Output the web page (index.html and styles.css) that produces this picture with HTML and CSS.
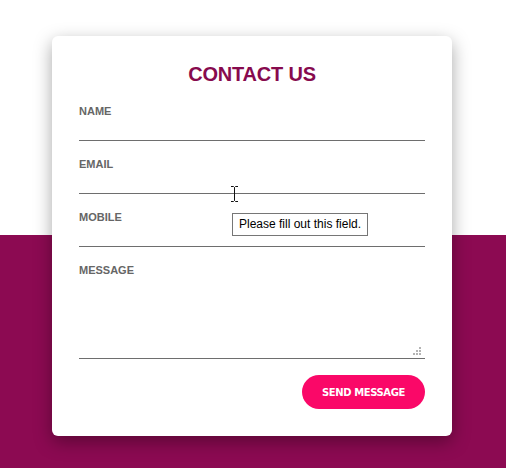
FILE: index.html
```html
<!DOCTYPE html>
<html>
<head>
<meta charset="utf-8">
<link rel="stylesheet" href="styles.css">
</head>
<body>
<div class="page">
  <form class="card">
    <h1 class="title">CONTACT US</h1>
    <div class="field">
      <label class="label">NAME</label>
      <input class="input" type="text">
    </div>
    <div class="field">
      <label class="label">EMAIL</label>
      <div class="input-wrap">
        <input class="input" type="text">
        <svg class="cursor" width="9" height="16" viewBox="0 0 9 16"><path d="M1 0.5h2.5l1 1 1-1H8M4.5 1.5v13M1 15.5h2.5l1-1 1 1H8" fill="none" stroke="#111" stroke-width="1"/></svg>
      </div>
    </div>
    <div class="field">
      <label class="label">MOBILE</label>
      <input class="input" type="text">
    </div>
    <div class="field">
      <label class="label">MESSAGE</label>
      <div class="input-wrap">
        <textarea class="textarea"></textarea>
        <svg class="grip" width="9" height="9" viewBox="0 0 9 9" fill="#b4b4b4"><rect x="6" y="0" width="2" height="2"/><rect x="3" y="3" width="2" height="2"/><rect x="6" y="3" width="2" height="2"/><rect x="0" y="6" width="2" height="2"/><rect x="3" y="6" width="2" height="2"/><rect x="6" y="6" width="2" height="2"/></svg>
      </div>
    </div>
    <div class="actions">
      <button class="button" type="button">SEND MESSAGE</button>
    </div>
    <div class="tooltip">Please fill out this field.</div>
  </form>
</div>
</body>
</html>
```

FILE: styles.css
```css
html, body {
  margin: 0;
  padding: 0;
}
body {
  width: 506px;
  height: 468px;
  overflow: hidden;
  background: linear-gradient(to bottom, #ffffff 0, #ffffff 235px, #8c0a52 235px, #8c0a52 100%);
  font-family: "Liberation Sans", Arial, sans-serif;
}
.page {
  padding: 36px 0 0 52px;
}
.card {
  position: relative;
  width: 400px;
  height: 400px;
  box-sizing: border-box;
  background: #ffffff;
  border-radius: 6px;
  box-shadow: 0 6px 18px rgba(0, 0, 0, 0.35);
  padding: 27px 27px 27px 27px;
  display: flex;
  flex-direction: column;
}
.title {
  margin: 0 0 19px 0;
  font-size: 20px;
  line-height: 23px;
  font-weight: bold;
  text-align: center;
  color: #870a4e;
  letter-spacing: -0.2px;
}
.field {
  display: flex;
  flex-direction: column;
  margin-bottom: 17px;
}
.label {
  font-size: 11px;
  line-height: 13px;
  font-weight: bold;
  color: #666666;
}
.input-wrap {
  position: relative;
  display: flex;
  flex-direction: column;
}
.input {
  display: block;
  box-sizing: border-box;
  width: 100%;
  height: 23px;
  margin: 0;
  padding: 0;
  border: none;
  border-bottom: 1px solid #6e6e6e;
  outline: none;
  background: transparent;
}
.cursor {
  position: absolute;
  left: 151px;
  top: 15px;
}
.textarea {
  display: block;
  box-sizing: border-box;
  width: 100%;
  height: 82px;
  margin: 0;
  padding: 0;
  border: none;
  border-bottom: 1px solid #6e6e6e;
  outline: none;
  background: transparent;
  resize: none;
}
.grip {
  position: absolute;
  right: 3px;
  bottom: 3px;
}
.actions {
  display: flex;
  justify-content: flex-end;
  margin-top: -1px;
}
.button {
  width: 123px;
  height: 34px;
  border: none;
  border-radius: 17px;
  background: #fa0868;
  color: #ffffff;
  font-family: "DejaVu Sans", Verdana, sans-serif;
  font-weight: bold;
  font-size: 10px;
  letter-spacing: -0.4px;
  padding: 0;
}
.tooltip {
  position: absolute;
  left: 180px;
  top: 177px;
  box-sizing: border-box;
  height: 23px;
  padding: 0 6px;
  border: 1px solid #767676;
  background: #ffffff;
  color: #000000;
  font-family: "Liberation Sans", Arial, sans-serif;
  font-size: 12px;
  line-height: 21px;
  white-space: nowrap;
}
```
